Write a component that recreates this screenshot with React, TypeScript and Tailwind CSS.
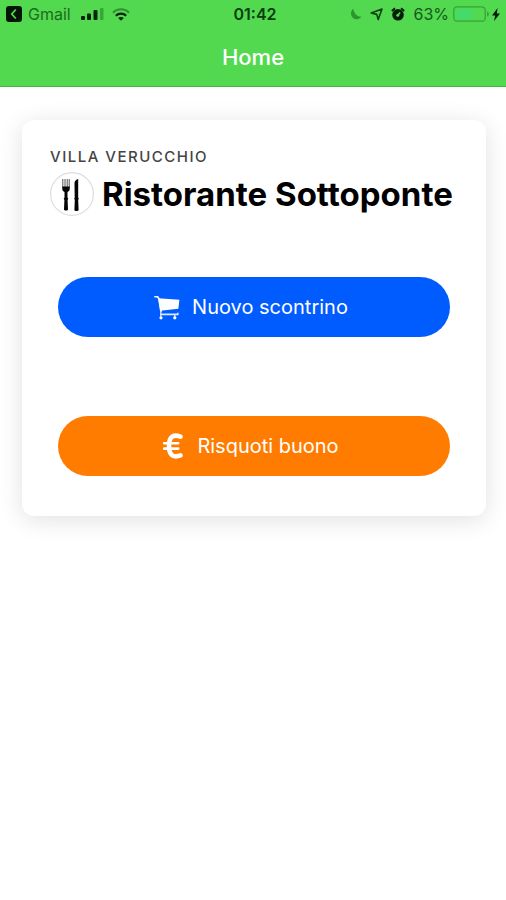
import type { ReactNode } from "react";

function SignalIcon() {
  return (
    <svg viewBox="0 0 23 12" className="h-3 w-[23px]" aria-hidden="true">
      <rect x="0" y="8" width="4" height="4" rx="1" fill="#06250a" />
      <rect x="6" y="5.5" width="4" height="6.5" rx="1" fill="#06250a" />
      <rect x="12.5" y="2" width="4" height="10" rx="1" fill="#06250a" />
      <rect x="19" y="0" width="3.5" height="12" rx="1" fill="#39a53a" />
    </svg>
  );
}

function WifiIcon() {
  return (
    <svg viewBox="0 0 18 13" className="h-[13px] w-[18px]" fill="none" aria-hidden="true">
      <path d="M1 4.8C5.4.2 12.6.2 17 4.8" stroke="#2f8f31" strokeWidth="2" />
      <path d="M3.8 7.7c3-2.9 7.4-2.9 10.4 0" stroke="#06250a" strokeWidth="2.2" />
      <path d="M9 12.8 6.2 10c1.6-1.4 4-1.4 5.6 0z" fill="#06250a" />
    </svg>
  );
}

function MoonIcon() {
  return (
    <svg viewBox="0 0 12 12" className="size-3" aria-hidden="true">
      <path d="M3.4.6A5.9 5.9 0 1 0 11.8 8.6C7.6 9.2 3.6 5.6 3.4.6z" fill="#2e9430" />
    </svg>
  );
}

function LocationIcon() {
  return (
    <svg viewBox="0 0 13 13" className="size-[13px]" fill="none" aria-hidden="true">
      <path d="M12 1 8.2 11.6 6.8 6.4 1.2 5z" stroke="#0b420f" strokeWidth="1.6" strokeLinejoin="round" />
    </svg>
  );
}

function AlarmIcon() {
  return (
    <svg viewBox="0 0 14 14" className="size-3.5" aria-hidden="true">
      <circle cx="7" cy="7.8" r="5.8" fill="#041c06" />
      <path d="M.8 4 4 1.2M13.2 4 10 1.2" stroke="#041c06" strokeWidth="1.8" />
      <path d="M9.2 5.4 7 8" fill="none" stroke="#52d94f" strokeWidth="1.5" />
      <circle cx="6.8" cy="8.2" r="1.5" fill="#52d94f" />
    </svg>
  );
}

function BatteryIcon() {
  return (
    <svg viewBox="0 0 37 16" className="h-4 w-[37px]" aria-hidden="true">
      <rect x="0.8" y="0.8" width="31.4" height="14.4" rx="3.5" fill="none" stroke="#36a437" strokeWidth="1.3" />
      <rect x="3" y="3" width="17" height="10" rx="1.5" fill="#43dc6a" />
      <path d="M34 5.5c2.6.6 2.6 4.4 0 5z" fill="#36a437" />
    </svg>
  );
}

function BoltIcon() {
  return (
    <svg viewBox="0 0 8 13" className="h-[13px] w-2" aria-hidden="true">
      <path d="M5.6 0 0 7.4h3.2L2 13l6-7.6H4.8z" fill="#041c06" />
    </svg>
  );
}

function CutleryIcon() {
  return (
    <svg viewBox="0 0 44 44" className="size-11 shrink-0" aria-hidden="true">
      <circle cx="22" cy="22" r="21.4" fill="#fff" stroke="#dedede" strokeWidth="1.2" />
      <path d="M12.8 7v9M15 7v9M17.2 7v9M19.2 7v9" stroke="#555" strokeWidth="1" />
      <path d="M12.3 14.5h7.4v2.5c0 1.8-1.2 2.6-2.2 3v5.5l.8 1.2-.7 1.2.4 9.6c0 1.4-4 1.4-4 0l.4-9.6-.7-1.2.8-1.2V20c-1-.4-2.2-1.2-2.2-3z" fill="#050505" />
      <path d="M28.2 7v18.5l.6 1.2-.6 1.2.4 10c0 1.5-4.2 1.5-4.2 0l.4-10-.6-1.2.5-1.2-.2-14.5c.2-2.2 1.6-3.4 3.7-4z" fill="#050505" />
    </svg>
  );
}

function CartIcon() {
  return (
    <svg viewBox="0 0 26 25" className="h-[25px] w-[26px]" fill="none" aria-hidden="true">
      <path d="M.3 1.8h3.4l1.2 2L7 17" stroke="#fff" strokeWidth="1.6" />
      <path d="M4.2 3.2 25.4 4.8l-1 9L6.3 15.8z" fill="#fff" />
      <path d="M6.2 19.4h17.6v-1.6" stroke="#dce8ff" strokeWidth="1.6" />
      <path d="M6.8 15.8v6M20.8 19.4v2.6" stroke="#dce8ff" strokeWidth="1.3" />
      <circle cx="7" cy="22.8" r="1.6" fill="#fff" />
      <circle cx="20.8" cy="22.8" r="1.6" fill="#fff" />
    </svg>
  );
}

function EuroIcon() {
  return (
    <svg viewBox="0 0 20 26" className="h-[26px] w-5" fill="none" aria-hidden="true">
      <path
        d="M17.4 3.6c-6.6-2.4-11.4-.4-11.4 9.4s4.8 11.8 11.4 9.4"
        stroke="#fff"
        strokeWidth="4.6"
        strokeLinecap="round"
      />
      <path d="M1.2 10.2h14M1.2 15.6h14" stroke="#fff" strokeWidth="2.6" strokeLinecap="round" />
    </svg>
  );
}

function PillButton({ icon, className, children }: { icon: ReactNode; className: string; children: ReactNode }) {
  return (
    <button
      type="button"
      className={`flex h-[60px] w-full items-center justify-center rounded-full pr-1.5 text-xl leading-7 text-white ${className}`}
    >
      {icon}
      <span>{children}</span>
    </button>
  );
}

export default function App() {
  return (
    <div className="min-h-screen bg-white font-['Inter','Liberation_Sans',sans-serif]">
      <header className="border-b border-[#3fba3c] bg-[#52d94f]">
        <div className="grid h-7 grid-cols-[1fr_auto_1fr] items-center px-1.5 text-base leading-5 text-[#0b3d0f]">
          <div className="flex items-center">
            <a href="#" className="flex items-center gap-1.5">
              <svg viewBox="0 0 16 16" className="size-4" aria-hidden="true">
                <rect width="16" height="16" rx="3" fill="#031405" />
                <path d="M9.8 3.5 5.8 8l4 4.5" fill="none" stroke="#52d94f" strokeWidth="1.8" />
              </svg>
              <span className="text-[#1d6b20]">Gmail</span>
            </a>
            <div className="ml-2.5 flex items-center gap-2">
              <SignalIcon />
              <WifiIcon />
            </div>
          </div>
          <time className="pl-1 font-semibold">01:42</time>
          <div className="flex items-center justify-end">
            <div className="mr-2 flex items-center gap-2">
              <MoonIcon />
              <LocationIcon />
              <AlarmIcon />
            </div>
            <span className="mr-1 text-[#16581a]">63%</span>
            <BatteryIcon />
            <span className="ml-0.5">
              <BoltIcon />
            </span>
          </div>
        </div>
        <h1 className="pt-[15px] pb-[15px] text-center text-[22px] leading-7 font-medium text-white">Home</h1>
      </header>

      <main className="pt-[33px] pr-5 pl-[22px]">
        <section className="rounded-xl bg-white px-7 pt-[27px] pb-10 shadow-[0_4px_24px_rgba(0,0,0,0.12)]">
          <p className="text-[15px] leading-5 font-medium tracking-widest text-[#444] uppercase">Villa Verucchio</p>
          <div className="mt-[5px] flex items-center gap-2">
            <CutleryIcon />
            <h2 className="text-[33px] leading-10 font-bold whitespace-nowrap text-black">Ristorante Sottoponte</h2>
          </div>
          <div className="mt-[61px] grid gap-[79px] px-2">
            <PillButton icon={<CartIcon />} className="gap-3 bg-[#005cff]">
              Nuovo scontrino
            </PillButton>
            <PillButton icon={<EuroIcon />} className="gap-3.5 bg-[#ff7c00]">
              Risquoti buono
            </PillButton>
          </div>
        </section>
      </main>
    </div>
  );
}
